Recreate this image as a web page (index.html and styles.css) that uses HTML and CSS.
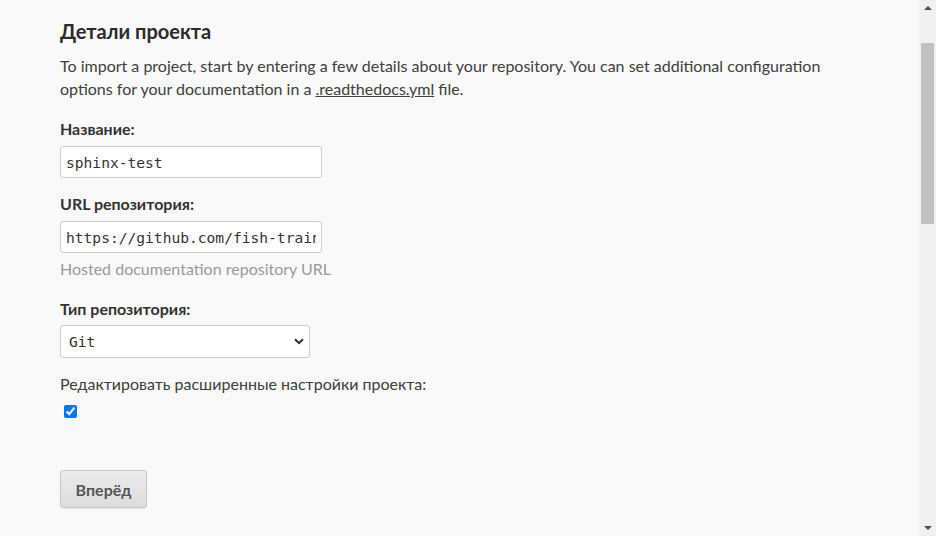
FILE: index.html
```html
<!DOCTYPE html>
<html lang="ru">
<head>
<meta charset="utf-8">
<title>Детали проекта</title>
<link rel="stylesheet" href="styles.css">
</head>
<body>
<div class="page">
  <main class="content">
    <h2 class="title">Детали проекта</h2>
    <p class="intro">To import a project, start by entering a few details about your repository. You can set additional configuration options for your documentation in a <a href="#">.readthedocs.yml</a> file.</p>
    <form class="form">
      <div class="field">
        <label class="label" for="name">Название:</label>
        <input class="input" id="name" type="text" value="sphinx-test">
      </div>
      <div class="field has-help">
        <label class="label" for="repo">URL репозитория:</label>
        <input class="input" id="repo" type="text" value="https://github.com/fish-train/sphinx-test">
        <span class="help">Hosted documentation repository URL</span>
      </div>
      <div class="field">
        <label class="label label-select" for="type">Тип репозитория:</label>
        <div class="select-wrap">
          <select class="select" id="type"><option>Git</option></select>
          <svg class="chev" width="10" height="7" viewBox="0 0 10 7"><path d="M1 1.2 L5 5 L9 1.2" fill="none" stroke="#333" stroke-width="2"/></svg>
        </div>
      </div>
      <div class="field check-field">
        <label class="plain-label" for="adv">Редактировать расширенные настройки проекта:</label>
        <input class="check" id="adv" type="checkbox" checked>
      </div>
      <div class="actions">
        <button type="button" class="btn">Вперёд</button>
      </div>
    </form>
  </main>
  <div class="scrollbar">
    <div class="arrow up"></div>
    <div class="track"><div class="thumb"></div></div>
    <div class="arrow down"></div>
  </div>
</div>
</body>
</html>
```
FILE: styles.css
```css
html, body {
  margin: 0;
  padding: 0;
  height: 100%;
  overflow: hidden;
}
body {
  background: #f9f9f9;
  font-family: Lato, "Noto Sans", sans-serif;
  color: #404040;
}
.page {
  display: flex;
  height: 536px;
}
.content {
  flex: 1;
  padding: 18px 0 0 60px;
}
.title {
  margin: 0;
  font-size: 20px;
  font-weight: 700;
  color: #2b2b2b;
  line-height: 26px;
}
.intro {
  margin: 10px 0 0;
  font-size: 16px;
  line-height: 23px;
  color: #404040;
  max-width: 780px;
}
.intro a {
  color: #404040;
  text-decoration: underline;
}
.form {
  margin-top: 19px;
}
.field {
  display: flex;
  flex-direction: column;
  align-items: flex-start;
  margin-bottom: 16px;
}
.field.has-help {
  margin-bottom: 20px;
}
.label {
  font-size: 16px;
  font-weight: 700;
  color: #333;
  line-height: 20px;
  margin-bottom: 7px;
}
.label.label-select {
  margin-bottom: 6px;
}
.input {
  box-sizing: border-box;
  width: 262px;
  height: 32px;
  border: 1px solid #ccc;
  border-radius: 3px;
  background: #fff;
  padding: 0 5px;
  font-family: "DejaVu Sans Mono", "Liberation Mono", monospace;
  font-size: 14.6px;
  color: #333;
  outline: none;
}
.help {
  margin-top: 6px;
  font-size: 16px;
  color: #999;
  line-height: 20px;
}
.select-wrap {
  position: relative;
}
.select {
  box-sizing: border-box;
  width: 250px;
  height: 33px;
  border: 1px solid #ccc;
  border-radius: 3px;
  background: #fff;
  padding: 0 8px;
  font-family: "DejaVu Sans Mono", "Liberation Mono", monospace;
  font-size: 14.6px;
  color: #333;
  appearance: none;
  -webkit-appearance: none;
  outline: none;
}
.chev {
  position: absolute;
  right: 6px;
  top: 13px;
  pointer-events: none;
}
.check-field {
  margin-bottom: 0;
}
.plain-label {
  font-size: 16px;
  line-height: 20px;
  color: #404040;
  margin-bottom: 11px;
}
.check {
  margin: 0 0 0 4px;
  width: 13px;
  height: 13px;
  accent-color: #0075ff;
}
.actions {
  margin-top: 52px;
}
.btn {
  box-sizing: border-box;
  width: 87px;
  height: 38px;
  border: 1px solid #c8c8c8;
  border-radius: 3px;
  background: linear-gradient(#ececec, #dcdcdc);
  font-family: Lato, "Noto Sans", sans-serif;
  font-size: 16px;
  font-weight: 700;
  color: #555;
  box-shadow: 0 1px 1px rgba(0,0,0,0.08);
}
.scrollbar {
  width: 17px;
  background: #f1f1f1;
  display: flex;
  flex-direction: column;
  align-items: center;
}
.arrow {
  width: 0;
  height: 0;
  border-left: 4px solid transparent;
  border-right: 4px solid transparent;
  margin: 6px 0;
}
.arrow.up {
  border-bottom: 4px solid #505050;
}
.arrow.down {
  border-top: 4px solid #505050;
}
.track {
  flex: 1;
  width: 100%;
  padding-top: 27px;
  box-sizing: border-box;
}
.thumb {
  width: 13px;
  height: 181px;
  margin-left: 2px;
  background: #c1c1c1;
}
```
